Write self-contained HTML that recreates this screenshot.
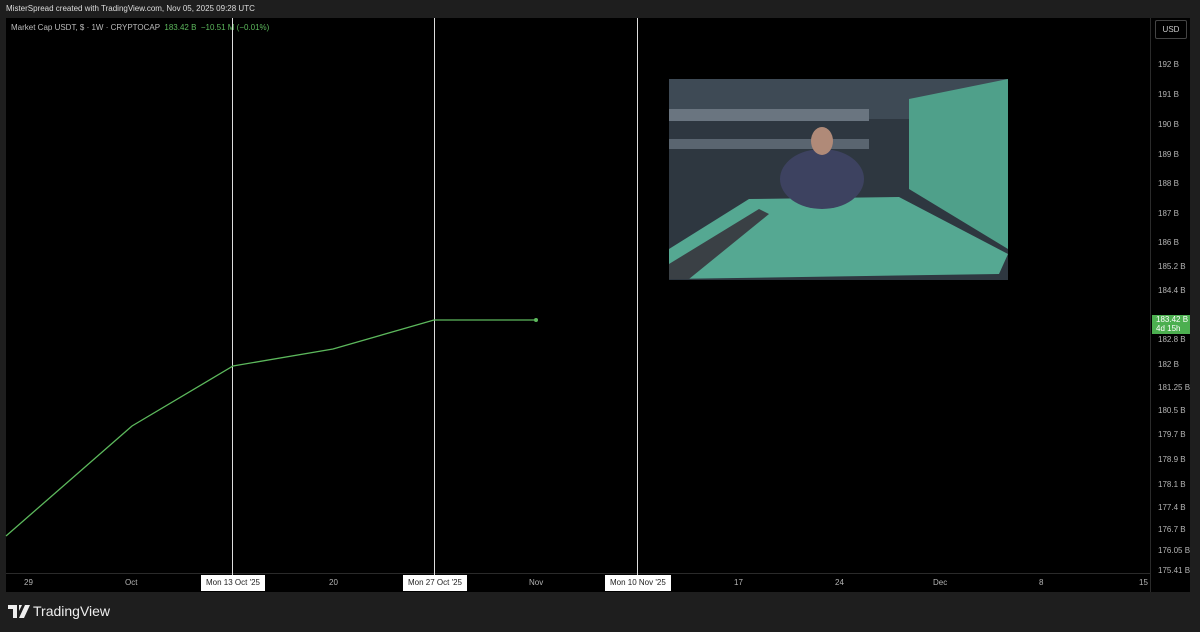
<!DOCTYPE html>
<html><head><style>
body{margin:0;width:1200px;height:632px;background:#1e1e1e;overflow:hidden;font-family:"Liberation Sans",sans-serif;position:relative}
.t{position:absolute;color:#ccc;font-size:8px;white-space:nowrap}
.pl{position:absolute;left:1158px;color:#b5b5b5;font-size:8px}
.ax{position:absolute;top:578px;color:#b5b5b5;font-size:8px}
.lb{position:absolute;top:575px;height:16px;background:#fff;color:#222;font-size:8px;line-height:16px;padding:0 5px}
</style></head><body>
<div class="t" style="left:6px;top:4px;color:#ddd">MisterSpread created with TradingView.com, Nov 05, 2025 09:28 UTC</div>
<div style="position:absolute;left:6px;top:18px;width:1184px;height:574px;background:#000"></div>
<div style="position:absolute;left:1150px;top:18px;width:1px;height:574px;background:#2a2a2a"></div>
<div style="position:absolute;left:6px;top:573px;width:1144px;height:1px;background:#2a2a2a"></div>
<div class="t" style="left:11px;top:23px;color:#bbb">Market Cap USDT, $ · 1W · CRYPTOCAP <span style="color:#5cb85c">&nbsp;183.42 B &nbsp;−10.51 M (−0.01%)</span></div>
<div style="position:absolute;left:1155px;top:20px;width:30px;height:17px;border:1px solid #444;border-radius:2px;color:#ccc;font-size:8px;line-height:17px;text-align:center">USD</div>
<svg style="position:absolute;left:0;top:0" width="1200" height="632">
<line x1="232.5" y1="18" x2="232.5" y2="575" stroke="#ddd" stroke-width="1"/>
<line x1="434.5" y1="18" x2="434.5" y2="575" stroke="#ddd" stroke-width="1"/>
<line x1="637.5" y1="18" x2="637.5" y2="575" stroke="#ddd" stroke-width="1"/>
<polyline points="6,536 132,426 233,366 333,349 434,320 536,320" fill="none" stroke="#5cb85c" stroke-width="1.3"/>
<circle cx="536" cy="320" r="2" fill="#5cb85c"/>
</svg>
<svg style="position:absolute;left:669px;top:79px" width="339" height="201">
<rect width="339" height="201" fill="#2e3740"/>
<rect x="0" y="0" width="339" height="40" fill="#3e4a55"/>
<rect x="0" y="30" width="200" height="12" fill="#6a7580"/>
<rect x="0" y="60" width="200" height="10" fill="#5a6570"/>
<polygon points="240,20 339,0 339,170 240,110" fill="#4fa08a"/>
<polygon points="0,170 80,120 230,118 339,175 330,195 0,200" fill="#55a892"/>
<polygon points="0,200 0,185 90,130 100,135 20,200" fill="#3a4045"/>
<ellipse cx="153" cy="100" rx="42" ry="30" fill="#3d4260"/>
<ellipse cx="153" cy="62" rx="11" ry="14" fill="#b08a78"/>
</svg>
<div class="pl" style="top:60px">192 B</div><div class="pl" style="top:90px">191 B</div><div class="pl" style="top:120px">190 B</div><div class="pl" style="top:150px">189 B</div><div class="pl" style="top:179px">188 B</div><div class="pl" style="top:209px">187 B</div><div class="pl" style="top:238px">186 B</div><div class="pl" style="top:262px">185.2 B</div><div class="pl" style="top:286px">184.4 B</div><div class="pl" style="top:335px">182.8 B</div><div class="pl" style="top:360px">182 B</div><div class="pl" style="top:383px">181.25 B</div><div class="pl" style="top:406px">180.5 B</div><div class="pl" style="top:430px">179.7 B</div><div class="pl" style="top:455px">178.9 B</div><div class="pl" style="top:480px">178.1 B</div><div class="pl" style="top:503px">177.4 B</div><div class="pl" style="top:525px">176.7 B</div><div class="pl" style="top:546px">176.05 B</div><div class="pl" style="top:566px">175.41 B</div>
<div style="position:absolute;left:1152px;top:315px;width:38px;height:19px;background:#4caf50;color:#fff;font-size:8px;line-height:9px;padding-left:4px;box-sizing:border-box">183.42 B<br>4d 15h</div>
<div class="ax" style="left:24px">29</div><div class="ax" style="left:125px">Oct</div><div class="ax" style="left:329px">20</div><div class="ax" style="left:529px">Nov</div><div class="ax" style="left:734px">17</div><div class="ax" style="left:835px">24</div><div class="ax" style="left:933px">Dec</div><div class="ax" style="left:1039px">8</div><div class="ax" style="left:1139px">15</div>
<div class="lb" style="left:201px">Mon 13 Oct '25</div><div class="lb" style="left:403px">Mon 27 Oct '25</div><div class="lb" style="left:605px">Mon 10 Nov '25</div>
<svg style="position:absolute;left:8px;top:605px" width="24" height="13"><path d="M0 0H9V13H5V4H0Z M11 0H14L11 6Z M17 0H22L16 13H11Z" fill="#eee"/></svg>
<div style="position:absolute;left:33px;top:603px;color:#eee;font-size:14px">TradingView</div>
</body></html>
